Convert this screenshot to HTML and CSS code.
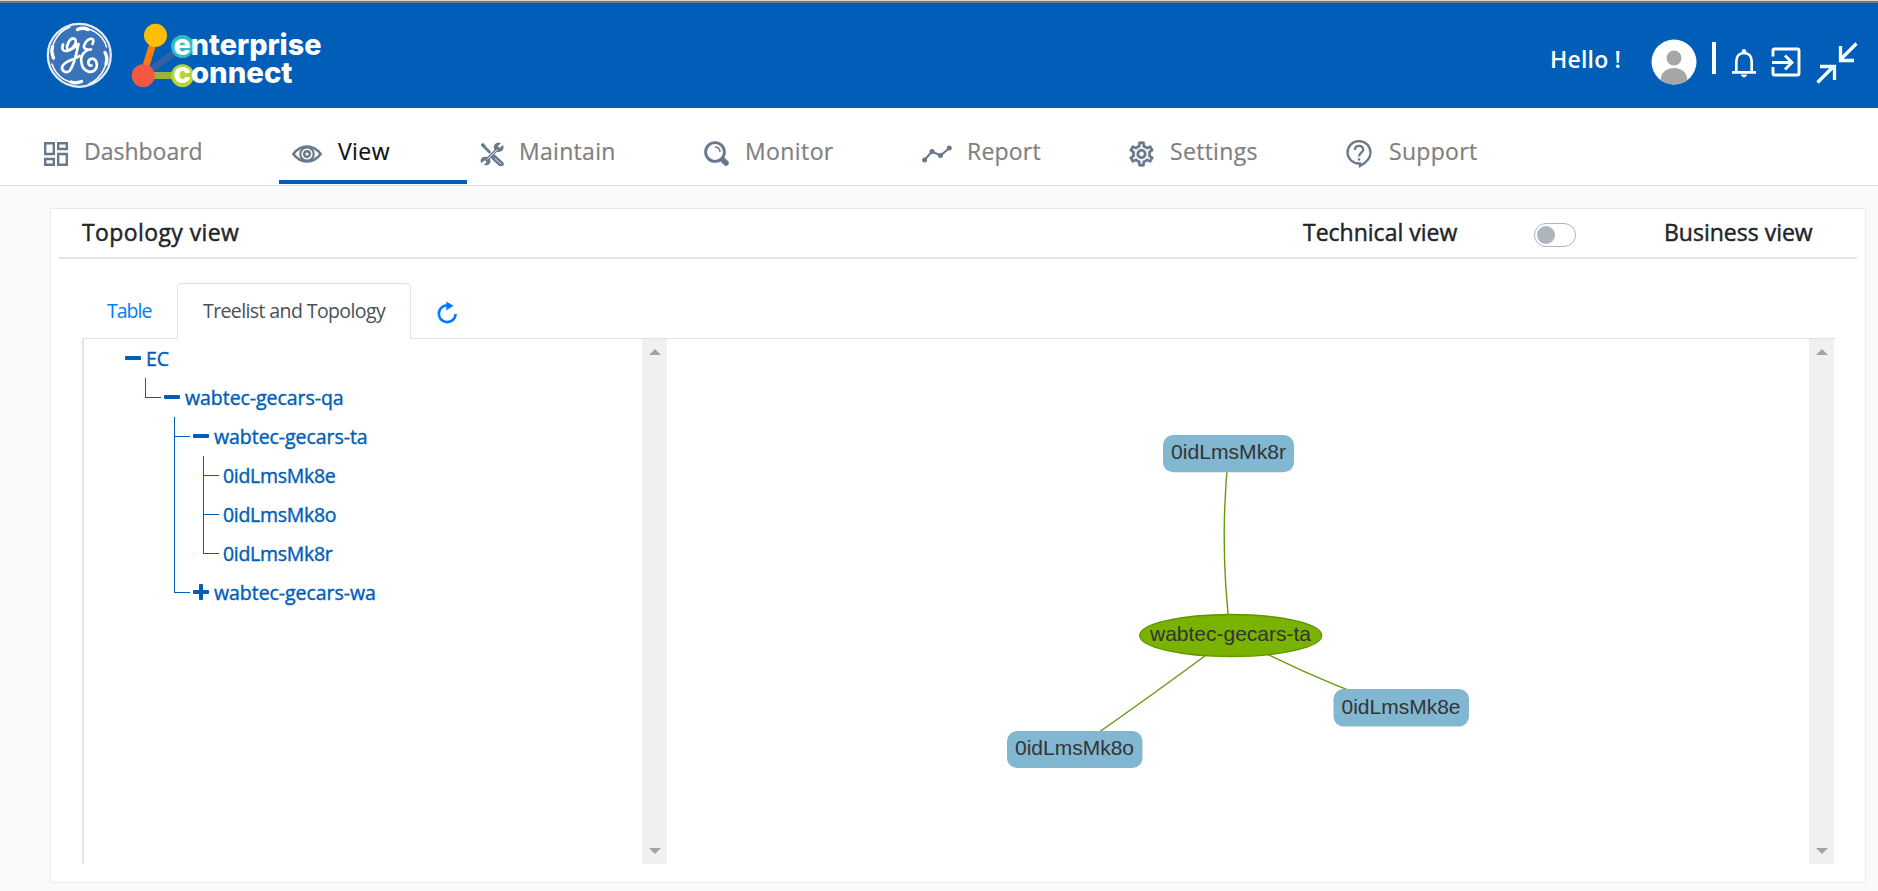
FILE: index.html
```html
<!DOCTYPE html>
<html lang="en">
<head>
<meta charset="utf-8">
<title>Enterprise Connect</title>
<link rel="stylesheet" href="styles.css">
</head>
<body>
<header class="topbar">
  <div class="brand">
    <svg class="ge" width="68" height="68" viewBox="45 21 68 68" fill="none" stroke="#fff" stroke-linecap="round" stroke-linejoin="round">
      <circle cx="79.300" cy="55.300" r="31.500" fill="#3b73b9" stroke="#e4edf8" stroke-width="2.200"/>
      <path d="M77 29.500C88 25 103 34 106.500 47" stroke-width="1.500"/><path d="M77.500 29.500C81 28 85 28 88 29.500" stroke-width="3.400"/>
      <path d="M53.500 58C49 46 57 32 70 27" stroke-width="1.500"/><path d="M53.500 58C51.800 54 51.500 50 52.500 47" stroke-width="3.400"/>
      <path d="M81.500 81.500C70 86 56 77 52 64" stroke-width="1.500"/><path d="M81.500 81.500C78 83 74 83 71 82" stroke-width="3.400"/>
      <path d="M105 52.500C110 63 101 79 89 84" stroke-width="1.500"/><path d="M105 52.500C107 56 107.300 60 106 64" stroke-width="3.400"/>
      <path d="M68.500 50.500C75 48 78 40 74 38.500C69 38 65 48 68.500 50.500M63 44.500C61 50 64 52 68.500 50.500C73 49 76.500 46 78.500 44C76.500 54 73.500 66 69.500 71C65.500 74 60.500 70 62.500 66C66 60 74 60 79.500 56" stroke-width="2.700"/>
      <path d="M92.500 44C95.500 38 90 37 86 42C82 47 84 50.500 91 49.500C84 50 80 56 81.500 63C83 72 92 74.500 96 68.500C98.500 63 95 57 90.500 59C87 61 88 66 91.500 65.500" stroke-width="2.700"/>
    </svg>
    <svg class="ec" width="200" height="72" viewBox="130 19 200 72">
      <path d="M143 75.700 155.500 35.300" stroke="#ff7e0b" stroke-width="7"/>
      <path d="M143 75.700 182 47" stroke="#2f60a8" stroke-width="7"/>
      <path d="M143 75.500H182" stroke="#9bb13c" stroke-width="7"/>
      <circle cx="155.500" cy="35.300" r="11.500" fill="#ffbf00"/>
      <circle cx="143.200" cy="75.700" r="11.500" fill="#f65743"/>
      <circle cx="182.500" cy="46.500" r="11.500" fill="#33b9c0"/>
      <circle cx="182.500" cy="75.700" r="11.500" fill="#b9d333"/>
      <text class="ec-word" x="173.500" y="54.500" textLength="148" lengthAdjust="spacingAndGlyphs">enterprise</text>
      <text class="ec-word" x="173.500" y="83" textLength="119" lengthAdjust="spacingAndGlyphs">connect</text>
    </svg>
  </div>
  <div class="user">
    <span class="hello">Hello !</span>
    <svg class="avatar" width="46" height="46" viewBox="0 0 46 46"><defs><clipPath id="face"><circle cx="23" cy="23" r="22.500"/></clipPath></defs><circle cx="23" cy="23" r="22.500" fill="#fff"/><g clip-path="url(#face)" fill="#a6a6a6"><circle cx="23" cy="19" r="7.500"/><path d="M9.500 46V42C9.500 34 15 29 23 29S36.500 34 36.500 42V46Z"/></g></svg>
    <span class="divider"></span>
    <svg class="bell" width="26" height="30" viewBox="0 0 26 30"><path d="M5.300 24V13.500C5.300 8 8.500 5 13 5S20.700 8 20.700 13.500V24M1 24.300H25" fill="none" stroke="#fff" stroke-width="2.700"/><path d="M10.800 5V3Q11 1 13 1T15.200 3V5ZM10 26.500H16Q15.500 29.300 13 29.300T10 26.500Z" fill="#fff"/></svg>
    <svg class="exit" width="30" height="30" viewBox="0 0 30 30" fill="none" stroke="#fff" stroke-width="2.900"><path d="M2 9.500V3.500Q2 2 3.500 2H26.500Q28 2 28 3.500V26.500Q28 28 26.500 28H3.500Q2 28 2 26.500V20M1 15.500H20M14 8.500 21 15.500 14 22.500"/></svg>
    <svg class="shrink" width="42" height="42" viewBox="0 0 42 42" fill="none" stroke="#fff" stroke-width="3.300"><path d="M40.500 1.500 25 17M24.500 4V18.500H38M1.500 40.500 17 25M4 24.500H18.500V38"/></svg>
  </div>
</header>

<nav class="menu">
  <a class="item"><svg class="ico" width="24" height="24" viewBox="0 0 24 24" fill="none" stroke="#68798d" stroke-width="2.400"><path d="M1.200 1.200H9.800V12H1.200ZM14.200 1.200H22.800V7H14.200ZM1.200 17H9.800V22.800H1.200ZM14.200 12H22.800V22.800H14.200Z"/></svg><span>Dashboard</span></a>
  <a class="item active"><svg class="ico" width="30" height="18" viewBox="0 0 30 18" fill="none" stroke="#68798d"><path d="M1.300 9Q7 1.500 15 1.500T28.700 9Q23 16.500 15 16.500T1.300 9Z" stroke-width="2.600"/><circle cx="15" cy="9" r="6.700" stroke-width="2.200"/><circle cx="15" cy="9" r="2.800" stroke-width="2.400"/></svg><span class="w-view">View</span></a>
  <a class="item"><svg class="ico" width="24" height="24" viewBox="0 0 24 24" fill="none" stroke="#68798d" stroke-linecap="round"><path d="M2.500 3 9.500 10" stroke-width="2.800"/><path d="M.8 2.800 3 .8 5.500 3.500 3.500 5.500Z" fill="#68798d" stroke="none"/><path d="M14 15.500 21 22" stroke-width="5.500"/><path d="M15 16.500 21 22" stroke="#fff" stroke-width=".8"/><path d="M21 1C15-.5 12.500 4 14.500 7.800L7.300 15C2.500 13.500-.5 17 1 21L5 18.200 6.700 20 4 23C9 24.500 11.500 20.500 10 16.700L17 9.700C21.500 11 25 7.500 23 3L19.500 6 17.800 4.300Z" fill="#68798d" stroke="none"/><path d="M7.500 17.200 17 7.700" stroke="#fff" stroke-width=".9"/></svg><span class="w-main">Maintain</span></a>
  <a class="item"><svg class="ico" width="25" height="25" viewBox="0 0 25 25" fill="none" stroke="#68798d" stroke-linecap="round"><circle cx="11" cy="11" r="9.400" stroke-width="2.900"/><path d="M19 19 22 22" stroke-width="5.500"/><path d="M11.500 6Q15.500 6.500 16 10.500" stroke-width="1.500"/></svg><span class="w-mon">Monitor</span></a>
  <a class="item"><svg class="ico" width="30" height="18" viewBox="0 0 30 18"><path d="M2.500 15 10 6.500 18.500 10.500 27.500 3" fill="none" stroke="#68798d" stroke-width="2.100"/><g fill="#68798d"><circle cx="2.600" cy="15" r="2.500"/><circle cx="10" cy="6.500" r="2.500"/><circle cx="18.500" cy="10.500" r="2.500"/><circle cx="27.300" cy="3" r="2.500"/></g></svg><span class="w-rep">Report</span></a>
  <a class="item"><svg class="ico" width="25" height="26" viewBox="2 1.500 20 21" fill="#68798d" stroke="#68798d" stroke-width=".25"><path d="M19.430 12.980c.04-.32.07-.64.07-.98s-.03-.66-.07-.98l2.110-1.650c.19-.15.24-.42.12-.64l-2-3.460a.5.5 0 0 0-.61-.22l-2.490 1a7.300 7.300 0 0 0-1.690-.98l-.38-2.650A.49.490 0 0 0 14 2h-4c-.25 0-.46.18-.49.42l-.38 2.650c-.61.25-1.170.59-1.690.98l-2.490-1a.5.5 0 0 0-.61.22l-2 3.460c-.13.220-.07.490.12.640l2.110 1.650c-.04.320-.07.650-.07.980s.03.660.07.980l-2.110 1.650c-.19.150-.24.420-.12.640l2 3.460c.12.220.39.300.61.220l2.490-1c.52.400 1.080.730 1.690.980l.38 2.650c.03.240.24.420.49.420h4c.25 0 .46-.18.490-.42l.38-2.650c.61-.25 1.170-.59 1.690-.98l2.490 1c.23.080.49 0 .61-.22l2-3.460a.5.5 0 0 0-.12-.64l-2.110-1.650zm-1.980-1.710c.04.310.05.520.05.730s-.02.430-.05.730l-.14 1.130.89.700 1.080.84-.7 1.210-1.270-.51-1.040-.42-.9.680c-.43.320-.84.560-1.250.730l-1.060.43-.16 1.130-.2 1.350h-1.400l-.35-2.480-1.060-.43c-.43-.18-.83-.41-1.230-.71l-.91-.7-1.060.43-1.270.51-.7-1.210 1.080-.84.890-.7-.14-1.130a7 7 0 0 1 0-1.480l.14-1.130-.89-.7-1.080-.84.700-1.210 1.270.51 1.040.42.900-.68c.43-.32.840-.56 1.250-.73l1.060-.43.350-2.480h1.390l.35 2.480 1.060.43c.43.180.83.410 1.230.71l.91.700 1.060-.43 1.270-.51.700 1.210-1.070.85-.89.700.14 1.130zM12 8a4 4 0 1 0 0 8 4 4 0 0 0 0-8zm0 6a2 2 0 1 1 0-4 2 2 0 0 1 0 4z"/></svg><span class="w-set">Settings</span></a>
  <a class="item"><svg class="ico" width="26" height="28" viewBox="0 0 26 28" fill="none" stroke="#68798d" stroke-width="2.300"><path d="M14 23.500V26Q24.500 20.500 24.500 12.300A11.500 11.200 0 1 0 13 23.500Z"/><path d="M8.800 10Q9 5.800 13 5.800T17.200 9.700C17.200 12.500 13 12.700 13 16.500"/><path d="M13 18.200V20.600"/></svg><span class="w-sup">Support</span></a>
</nav>

<main class="card">
  <div class="card-head">
    <span class="w-top">Topology view</span>
    <span class="w-tech">Technical view</span>
    <span class="switch"><i class="knob"></i></span>
    <span class="w-bus">Business view</span>
  </div>
  <div class="tabs">
    <a class="tab first">Table</a>
    <a class="tab on">Treelist and Topology</a>
    <svg class="refresh" width="22" height="24" viewBox="436 301 22 24"><path d="M448.500 305.400A8.400 8.400 0 1 0 455.600 314" fill="none" stroke="#007bff" stroke-width="2.700"/><path d="M446.300 301.500 453.500 305.800 446.300 310.500Z" fill="#007bff"/></svg>
  </div>
  <div class="panes">
    <section class="tree">
      <div class="row"><i class="sign"></i><span>EC</span></div>
      <ul class="level root">
        <li><div class="row"><i class="sign"></i><span>wabtec-gecars-qa</span></div>
          <ul class="level">
            <li><div class="row"><i class="sign"></i><span>wabtec-gecars-ta</span></div>
              <ul class="level">
                <li><div class="row leaf"><span>0idLmsMk8e</span></div></li>
                <li><div class="row leaf"><span>0idLmsMk8o</span></div></li>
                <li><div class="row leaf"><span>0idLmsMk8r</span></div></li>
              </ul>
            </li>
            <li><div class="row"><i class="sign plus"></i><span>wabtec-gecars-wa</span></div></li>
          </ul>
        </li>
      </ul>
    </section>
    <div class="scroll"><i class="up"></i><i class="down"></i></div>
    <svg class="graph" width="1142" height="525" viewBox="667 339 1142 525">
      <g class="edges">
        <path d="M1228.500 454Q1219 545 1230.500 635"/>
        <path d="M1230.500 637Q1150 697 1075 749"/>
        <path d="M1230.500 635Q1315 681 1401 709"/>
      </g>
      <ellipse cx="1230.700" cy="635.500" rx="91" ry="21" fill="#7ab200" stroke="#5f9500" stroke-width="1.300"/>
      <g fill="#82b7d2">
        <rect x="1163" y="435" width="131" height="37.300" rx="10"/>
        <rect x="1007" y="731" width="135.500" height="37" rx="10"/>
        <rect x="1333.500" y="689" width="135.500" height="37.500" rx="10"/>
      </g>
      <g class="names">
        <text x="1171" y="459" textLength="115" lengthAdjust="spacingAndGlyphs">0idLmsMk8r</text>
        <text x="1150" y="641" textLength="161" lengthAdjust="spacingAndGlyphs">wabtec-gecars-ta</text>
        <text x="1015" y="755" textLength="119" lengthAdjust="spacingAndGlyphs">0idLmsMk8o</text>
        <text x="1341.500" y="714" textLength="119" lengthAdjust="spacingAndGlyphs">0idLmsMk8e</text>
      </g>
    </svg>
    <div class="scroll"><i class="up"></i><i class="down"></i></div>
  </div>
</main>
</body>
</html>
```
FILE: styles.css
```css
* { box-sizing: border-box; }
body { margin: 0; height: 891px; overflow: hidden; background: #f8fafc; font-family: "Open Sans", "Noto Sans", sans-serif; color: #212529; font-size: 23px; white-space: nowrap; }
svg { display: block; flex: none; }

.topbar { height: 108px; border-top: 1px solid #d5d5d5; background: #005eb8; box-shadow: inset 0 2px 0 #737b80; display: flex; justify-content: space-between; align-items: flex-start; }
.brand { display: flex; padding-left: 45px; }
.ge { margin-top: 20px; }
.ec { margin: 18px 0 0 17px; }
.ec-word { font: 800 29px Inter, sans-serif; fill: #fff; }
.user { display: flex; align-items: flex-start; padding-right: 20px; color: #fff; }
.hello { width: 71px; margin: 41px 30px 0 0; line-height: 34px; font-weight: 600; letter-spacing: .2px; }
.avatar { margin-top: 38px; }
.divider { width: 4px; height: 32px; margin: 41px 15px 0; background: #fff; }
.bell { margin-top: 47px; }
.exit { margin: 46px 15px 0 14px; }
.shrink { margin-top: 41px; }

.menu { height: 78px; padding-left: 44px; background: #fff; border-bottom: 1px solid #dfe3e8; display: grid; grid-template-columns: 235px 201px 224px 218px 207px 217px 200px; }
.item { display: flex; align-items: center; height: 76px; padding-top: 10px; gap: 16px; color: #808080; -webkit-text-stroke: .2px; }
.item .ico { margin-top: 5px; }
.item.active { width: 188px; padding: 10px 0 0 13px; color: #111; box-shadow: inset 0 -4px 0 #005eb8; }
.w-view { letter-spacing: .4px; }
.w-main { letter-spacing: .3px; margin-left: -1px; }
.w-mon { letter-spacing: .4px; }
.w-rep { margin-left: -1px; letter-spacing: .2px; }
.w-set { letter-spacing: .3px; }
.w-sup { letter-spacing: .3px; margin-left: 1px; }

.card { width: 1816px; height: 675px; margin: 22px 0 0 50px; background: #fff; border: 1px solid #e9ebee; }
.card-head { height: 50px; margin: 0 8px; padding: 0 44px 2px 23px; border-bottom: 2px solid #e4e5e6; display: flex; align-items: center; -webkit-text-stroke: .45px; }
.w-top { width: 157px; margin-right: auto; letter-spacing: .4px; }
.w-tech { width: 155px; }
.w-bus { width: 149px; }
.switch { width: 42px; height: 24px; margin: 5px 88px 0 76px; border: 1px solid #adb5bd; border-radius: 12px; padding: 2px; }
.knob { display: block; width: 18px; height: 18px; border-radius: 50%; background: #adb5bd; }

.tabs { height: 56px; margin: 24px 30px 0 31px; border-bottom: 1px solid #dee2e6; display: flex; font-size: 19.500px; letter-spacing: -.6px; color: #007bff; }
.tab { width: 95px; height: 56px; padding-left: 25px; line-height: 55px; }
.tab.first { letter-spacing: -1px; }
.tab.on { width: 234px; line-height: 53px; border: 1px solid #dee2e6; border-bottom-color: #fff; border-radius: 5px 5px 0 0; background: #fff; color: #495057; }
.refresh { margin: 18px 0 0 25px; }

.panes { height: 525px; margin: 0 30px 0 31px; display: flex; }
.tree { width: 560px; border-left: 2px solid #e5e5e6; padding-left: 41px; color: #005eb8; font-size: 19.500px; letter-spacing: -.05px; -webkit-text-stroke: .4px; }
.row { height: 39px; line-height: 39px; display: flex; align-items: center; }
.leaf { letter-spacing: -.3px; padding-left: 1px; }
.sign { width: 16px; height: 4px; margin: -1px 5px 0 0; border-radius: 1px; background: #005eb8; position: relative; }
.plus::after { content: ""; position: absolute; left: 6px; top: -6px; width: 4px; height: 16px; border-radius: 1px; background: #005eb8; }
.level { list-style: none; margin: 0 0 0 10px; padding: 0; }
.level.root { margin-left: 20px; }
.level li { position: relative; padding-left: 19px; }
.level li::before { content: ""; position: absolute; left: 0; top: 0; width: 15px; height: 19px; border: solid #005eb8; border-width: 0 0 1px 1px; }
.level li:not(:last-child)::after { content: ""; position: absolute; left: 0; top: 0; bottom: 0; border-left: 1px solid #005eb8; }
.scroll { width: 25px; background: #f0f0f0; display: flex; flex-direction: column; justify-content: space-between; align-items: center; padding: 10px 0; }
.up, .down { border: solid transparent; border-width: 0 6px; }
.up { border-bottom: 6px solid #a3a3a3; }
.down { border-top: 6px solid #a3a3a3; }
.edges { fill: none; stroke: #659a0b; stroke-width: 1.400; }
.names { font: 21px "Liberation Sans", Arial, sans-serif; fill: #343434; }
```
